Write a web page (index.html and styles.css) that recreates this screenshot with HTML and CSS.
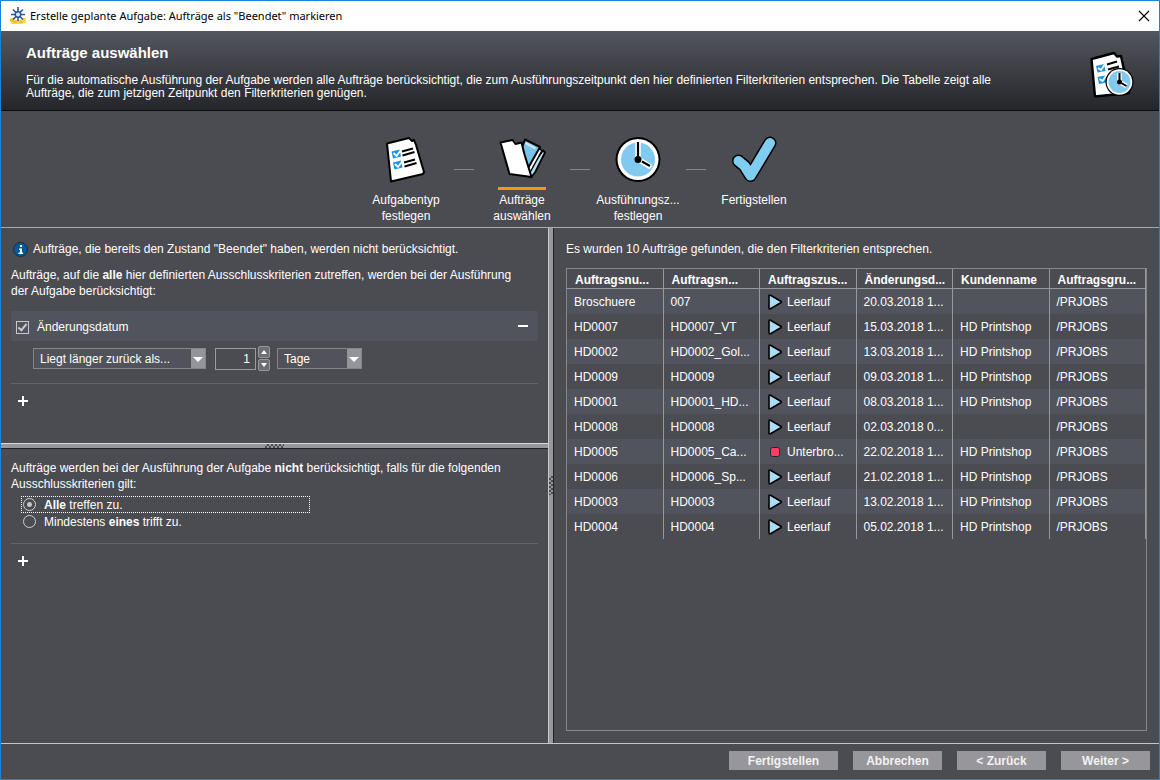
FILE: index.html
```html
<!DOCTYPE html>
<html lang="de">
<head>
<meta charset="utf-8">
<title>Erstelle geplante Aufgabe</title>
<link rel="stylesheet" href="styles.css">
</head>
<body>
<div class="window">
  <div class="titlebar">
    <svg class="app-icon" width="18" height="18" viewBox="0 0 18 18">
      <path d="M1 11h4l2 2h4l2-2h4v5h-3v1H2v-2H1z" fill="#ffd84a"/>
      <path d="M1 13h3v2h4M10 15h4" stroke="#e5a823" fill="none"/>
      <g stroke="#2a5697" stroke-width="1.600" fill="none"><path d="M9 0v14M2 7.500h14M4 2.500l10 10M14 2.500l-10 10"/></g>
      <circle cx="9" cy="7.500" r="3.500" fill="#2a5697"/><circle cx="9" cy="7.500" r="2" fill="#d9ecfb"/>
    </svg>
    <span class="window-title">Erstelle geplante Aufgabe: Aufträge als "Beendet" markieren</span>
    <button class="close" type="button" aria-label="Schließen">
      <svg width="12" height="12" viewBox="0 0 12 12"><path d="M1 1l10 10M11 1L1 11" stroke="#000" stroke-width="1.100"/></svg>
    </button>
  </div>

  <header class="banner">
    <div class="banner-text">
      <h1>Aufträge auswählen</h1>
      <p>Für die automatische Ausführung der Aufgabe werden alle Aufträge berücksichtigt, die zum Ausführungszeitpunkt den hier definierten Filterkriterien entsprechen. Die Tabelle zeigt alle Aufträge, die zum jetzigen Zeitpunkt den Filterkriterien genügen.</p>
    </div>
    <svg class="banner-icon" width="46" height="48" viewBox="0 0 46 48">
      <path d="M2.500 8L25 2l3 3.500 4-.5 8 37-34 3.500z" fill="#fff" stroke="#000" stroke-width="2.400" stroke-linejoin="round"/>
      <path d="M7 15l8-2 1.500 7-8 1.500zM8.500 26l8-1.500 1.500 7-8 1.500z" fill="#1b95e0"/>
      <path d="M9 17l3 2 4-6M10.500 28l3 2 4-6" fill="none" stroke="#fff" stroke-width="1.800"/>
      <path d="M18 13.500l10-3M19 18.500l11-3M20 25l5-2" stroke="#000" stroke-width="2"/>
      <circle cx="30.500" cy="31" r="14" fill="#000"/><circle cx="30.500" cy="31" r="12.800" fill="#fff"/>
      <circle cx="30.500" cy="31" r="11" fill="#82c9ec"/>
      <path d="M30.500 31v-9M30.500 31l7 4" stroke="#fff" stroke-width="4.500"/>
      <path d="M30.500 31v-9M30.500 31l7 4" stroke="#000" stroke-width="2"/>
      <circle cx="30.500" cy="31" r="2.500" fill="#000"/>
    </svg>
  </header>

  <nav class="steps" aria-label="Schritte">
    <div class="step">
      <svg width="48" height="48" viewBox="0 0 48 48">
        <path d="M5 8.500L27 3l3 3 2-1 2 5 8 27-1 2-32 7.500z" fill="#fff" stroke="#000" stroke-width="2" stroke-linejoin="round"/>
        <path d="M9.500 16.500l8-2 1.500 7-8 2zM11 27.500l8-2 1.500 7-8 2z" fill="#1b95e0"/>
        <path d="M11.500 18l3 3 4.500-6M13 29l3 3 4.500-6" fill="none" stroke="#fff" stroke-width="1.800"/>
        <path d="M20 16.500l11-3M20.500 20.500l12-3.500M22 27.500l11-3M22.500 31.500l12-3.500" stroke="#000" stroke-width="2"/>
      </svg>
      <span>Aufgabentyp festlegen</span>
    </div>
    <div class="line"></div>
    <div class="step current">
      <svg width="48" height="48" viewBox="0 0 48 48">
        <path d="M30 36L45 15.500l2 2-10 20-4 5z" fill="#b4dff5" stroke="#000" stroke-width="1.800" stroke-linejoin="round"/>
        <path d="M28 34L40 13l4 2.500-12 22z" fill="#fff" stroke="#000" stroke-width="1.500" stroke-linejoin="round"/>
        <path d="M22 18L27 4.500l15 7.500-13 23z" fill="#78c4ea" stroke="#000" stroke-width="2" stroke-linejoin="round"/>
        <path d="M27.500 8l10 5.500" stroke="#cdeafa" stroke-width="2"/>
        <path d="M2.500 7.500l12-2.500 3 4 6-1.500 3 12 7 22.500-22-3z" fill="#fff" stroke="#000" stroke-width="2" stroke-linejoin="round"/>
      </svg>
      <span>Aufträge auswählen</span>
    </div>
    <div class="line"></div>
    <div class="step">
      <svg width="48" height="48" viewBox="0 0 48 48">
        <circle cx="24" cy="24.500" r="22.500" fill="#000"/><circle cx="24" cy="24.500" r="20.500" fill="#fff"/>
        <circle cx="24" cy="24.500" r="17" fill="#82c9ef"/>
        <path d="M24 24V8M27 26l8 5" stroke="#fff" stroke-width="5.500" stroke-linecap="round"/>
        <path d="M24 24V7M28 26.500l8 4.500" stroke="#000" stroke-width="2.200"/>
        <circle cx="24" cy="24.500" r="3.500" fill="#000"/>
      </svg>
      <span>Ausführungsz... festlegen</span>
    </div>
    <div class="line"></div>
    <div class="step">
      <svg width="48" height="48" viewBox="0 0 48 48">
        <path d="M8.500 26l6 5 6 9.500L40 8" fill="none" stroke="#000" stroke-width="13" stroke-linecap="round" stroke-linejoin="round"/>
        <path d="M8.500 26l6 5 6 9.500L40 8" fill="none" stroke="#7fcdf1" stroke-width="10" stroke-linecap="round" stroke-linejoin="round"/>
      </svg>
      <span>Fertigstellen</span>
    </div>
  </nav>

  <main class="content">
    <div class="filters">
      <section class="pane include">
        <p class="info">
          <svg width="15" height="15" viewBox="0 0 15 15"><circle cx="7.500" cy="7.500" r="7" fill="#005a9a" stroke="#242a38"/><path d="M7 3h2v2H7zM6 6.500h3v4h1V12H5.500v-1.500H7V8H6z" fill="#fff"/></svg>
          Aufträge, die bereits den Zustand "Beendet" haben, werden nicht berücksichtigt.
        </p>
        <p class="text">Aufträge, auf die <b>alle</b> hier definierten Ausschlusskriterien zutreffen, werden bei der Ausführung der Aufgabe berücksichtigt:</p>
        <div class="criterion">
          <label><input class="check" type="checkbox" checked>Änderungsdatum</label>
          <button class="icon-button" type="button" aria-label="Kriterium entfernen"><svg width="10" height="10" viewBox="0 0 10 10"><path d="M0 4h10v2H0z" fill="#fff"/></svg></button>
        </div>
        <div class="fields">
          <select class="select comparison" aria-label="Vergleich"><option>Liegt länger zurück als...</option></select>
          <div class="spinner">
            <input class="amount" type="text" value="1" aria-label="Anzahl">
            <div class="spin-buttons">
              <button type="button" aria-label="Mehr"><svg width="6" height="4" viewBox="0 0 6 4"><path d="M0 4l3-4 3 4z" fill="#fff"/></svg></button>
              <button type="button" aria-label="Weniger"><svg width="6" height="4" viewBox="0 0 6 4"><path d="M0 0l3 4 3-4z" fill="#fff"/></svg></button>
            </div>
          </div>
          <select class="select unit" aria-label="Einheit"><option>Tage</option></select>
        </div>
        <div class="add-row"><button class="icon-button" type="button" aria-label="Kriterium hinzufügen"><svg width="10" height="10" viewBox="0 0 10 10"><path d="M0 4h4V0h2v4h4v2H6v4H4V6H0z" fill="#fff"/></svg></button></div>
      </section>
      <div class="split horizontal"><i class="grip"></i></div>
      <section class="pane exclude">
        <p class="text">Aufträge werden bei der Ausführung der Aufgabe <b>nicht</b> berücksichtigt, falls für die folgenden Ausschlusskriterien gilt:</p>
        <div class="radios">
          <label class="focused"><input type="radio" name="match" checked><span><b>Alle</b> treffen zu.</span></label>
          <label><input type="radio" name="match"><span>Mindestens <b>eines</b> trifft zu.</span></label>
        </div>
        <div class="add-row"><button class="icon-button" type="button" aria-label="Ausschlusskriterium hinzufügen"><svg width="10" height="10" viewBox="0 0 10 10"><path d="M0 4h4V0h2v4h4v2H6v4H4V6H0z" fill="#fff"/></svg></button></div>
      </section>
    </div>
    <div class="split vertical"><i class="grip"></i></div>
    <section class="results">
      <p>Es wurden 10 Aufträge gefunden, die den Filterkriterien entsprechen.</p>
      <div class="table-box">
        <svg class="symbols" width="0" height="0">
          <symbol id="idle" viewBox="0 0 14 16"><path d="M1 1.200v13.600h1.500L13.200 8.500v-1L2.500 1.200z" fill="#a9dcf5" stroke="#000" stroke-width="1.600" stroke-linejoin="round"/></symbol>
          <symbol id="stopped" viewBox="0 0 14 16"><rect x="2.500" y="3.500" width="9" height="9" rx="2" fill="#ff3b68" stroke="#26262a"/></symbol>
        </svg>
        <table>
          <thead><tr><th>Auftragsnu...</th><th>Auftragsn...</th><th>Auftragszus...</th><th>Änderungsd...</th><th>Kundenname</th><th>Auftragsgru...</th></tr></thead>
          <tbody>
            <tr><td>Broschuere</td><td>007</td><td><svg class="state"><use href="#idle"/></svg>Leerlauf</td><td>20.03.2018 1...</td><td></td><td>/PRJOBS</td></tr>
            <tr><td>HD0007</td><td>HD0007_VT</td><td><svg class="state"><use href="#idle"/></svg>Leerlauf</td><td>15.03.2018 1...</td><td>HD Printshop</td><td>/PRJOBS</td></tr>
            <tr><td>HD0002</td><td>HD0002_Gol...</td><td><svg class="state"><use href="#idle"/></svg>Leerlauf</td><td>13.03.2018 1...</td><td>HD Printshop</td><td>/PRJOBS</td></tr>
            <tr><td>HD0009</td><td>HD0009</td><td><svg class="state"><use href="#idle"/></svg>Leerlauf</td><td>09.03.2018 1...</td><td>HD Printshop</td><td>/PRJOBS</td></tr>
            <tr><td>HD0001</td><td>HD0001_HD...</td><td><svg class="state"><use href="#idle"/></svg>Leerlauf</td><td>08.03.2018 1...</td><td>HD Printshop</td><td>/PRJOBS</td></tr>
            <tr><td>HD0008</td><td>HD0008</td><td><svg class="state"><use href="#idle"/></svg>Leerlauf</td><td>02.03.2018 0...</td><td></td><td>/PRJOBS</td></tr>
            <tr><td>HD0005</td><td>HD0005_Ca...</td><td><svg class="state"><use href="#stopped"/></svg>Unterbro...</td><td>22.02.2018 1...</td><td>HD Printshop</td><td>/PRJOBS</td></tr>
            <tr><td>HD0006</td><td>HD0006_Sp...</td><td><svg class="state"><use href="#idle"/></svg>Leerlauf</td><td>21.02.2018 1...</td><td>HD Printshop</td><td>/PRJOBS</td></tr>
            <tr><td>HD0003</td><td>HD0003</td><td><svg class="state"><use href="#idle"/></svg>Leerlauf</td><td>13.02.2018 1...</td><td>HD Printshop</td><td>/PRJOBS</td></tr>
            <tr><td>HD0004</td><td>HD0004</td><td><svg class="state"><use href="#idle"/></svg>Leerlauf</td><td>05.02.2018 1...</td><td>HD Printshop</td><td>/PRJOBS</td></tr>
          </tbody>
        </table>
      </div>
    </section>
  </main>

  <footer class="actions">
    <button class="action wide" type="button">Fertigstellen</button>
    <button class="action" type="button">Abbrechen</button>
    <button class="action" type="button">&lt; Zurück</button>
    <button class="action" type="button">Weiter &gt;</button>
  </footer>
</div>
</body>
</html>
```
FILE: styles.css
```css
* { box-sizing: border-box; }
body { margin: 0; }
h1, p { margin: 0; }
button, input, select { font: inherit; color: inherit; margin: 0; }
svg { flex: none; }

.window {
  display: flex;
  flex-direction: column;
  min-height: 100vh;
  border: 1px solid #1883d7;
  background: #4b4b52;
  color: #fff;
  font: 12px/16px "Liberation Sans", Arial, sans-serif;
}

.titlebar {
  display: flex;
  align-items: center;
  gap: 3px;
  height: 30px;
  padding: 0 8px;
  background: #fff;
  color: #000;
}
.window-title { flex: 1; font: 11px/16px "Noto Sans", "Segoe UI", sans-serif; }
.close { display: flex; padding: 1px; border: 0; background: none; }

.banner {
  display: flex;
  align-items: center;
  justify-content: space-between;
  gap: 64px;
  height: 80px;
  padding: 0 24px 0 25px;
  border-bottom: 1px solid #0c0c0e;
  background: linear-gradient(#54565f, #25262a);
}
.banner h1 { font-size: 15px; line-height: 16px; margin-bottom: 13px; }
.banner p { line-height: 13px; }
.banner-text { padding-top: 3px; }
.banner-icon { margin-top: 8px; }

.steps {
  display: flex;
  justify-content: center;
  height: 117px;
  padding-top: 24px;
  border-bottom: 1px solid #a4abb5;
}
.step {
  display: flex;
  flex-direction: column;
  align-items: center;
  width: 96px;
  text-align: center;
}
.step svg { height: 52px; padding-bottom: 4px; margin-bottom: 5px; }
.step.current svg { height: 55px; margin-bottom: 2px; border-bottom: 3px solid #ff9408; }
.line { width: 20px; height: 1px; margin-top: 34px; background: #85858a; }

.content {
  flex: 1;
  display: grid;
  grid-template-columns: minmax(0, 547fr) 6px minmax(0, 605fr);
}
.filters { display: flex; flex-direction: column; }
.pane { padding: 0 10px; }
.include { height: 215px; padding-top: 13px; }
.exclude { padding-top: 11px; }

.info { display: flex; align-items: center; gap: 5px; padding: 0 2px; margin-bottom: 10px; }
.text { padding-right: 10px; }
.criterion {
  display: flex;
  align-items: center;
  justify-content: space-between;
  height: 30px;
  margin-top: 12px;
  padding: 0 5px;
  background: #51545c;
}
.criterion label { display: flex; align-items: center; gap: 8px; padding-top: 2px; }
.check {
  appearance: none;
  display: grid;
  place-items: center;
  width: 13px;
  height: 13px;
  border: 1px solid #c9c9cc;
}
.check:checked::after {
  content: "";
  box-sizing: border-box;
  width: 5px;
  height: 9px;
  margin-bottom: 2px;
  border: solid #c9c9cc;
  border-width: 0 2px 2px 0;
  transform: rotate(40deg);
}
.icon-button { display: flex; padding: 5px; border: 0; background: none; }

.fields { display: flex; align-items: center; padding: 5px 0 0 22px; }
.select {
  appearance: none;
  height: 21px;
  padding: 0 20px 0 6px;
  border: 1px solid #85858a;
  border-radius: 0;
  background:
    url('data:image/svg+xml,<svg xmlns="http://www.w3.org/2000/svg" width="14" height="19"><path d="M0 0h14v19H0z" fill="%2394959a"/><path d="M2 8h10l-5 5z" fill="%23fff"/></svg>') right no-repeat,
    #52535a;
}
.comparison { width: 173px; margin-right: 9px; }
.unit { width: 85px; }
.spinner { display: flex; align-items: center; gap: 2px; margin-right: 7px; }
.amount {
  width: 41px;
  height: 22px;
  padding: 0 5px;
  border: 1px solid #9a9a9e;
  background: #4b4b52;
  text-align: right;
}
.spin-buttons { display: flex; flex-direction: column; gap: 1px; }
.spin-buttons button {
  display: grid;
  place-items: center;
  width: 12px;
  height: 12px;
  padding: 0;
  border: 1px solid #97989d;
  border-radius: 2px;
  background: #6d6e74;
}
.add-row { margin-top: 12px; padding: 7px 2px; border-top: 1px solid #636369; }

.split { display: flex; align-items: center; justify-content: center; background: #98989c; }
.horizontal { height: 6px; border-top: 1px solid #d9d9db; border-bottom: 1px solid #222226; }
.vertical { border-left: 1px solid #c8c8ca; border-right: 1px solid #222226; }
.grip { background: repeating-conic-gradient(#4b4b50 0 25%, transparent 0 50%) 0 0 / 4px 4px; }
.horizontal .grip { width: 19px; height: 4px; }
.vertical .grip { width: 4px; height: 19px; }

.radios { display: flex; flex-direction: column; align-items: flex-start; padding: 4px 0 0 10px; }
.radios label {
  display: flex;
  align-items: center;
  gap: 8px;
  width: 289px;
  height: 17px;
  padding: 0 1px;
  border: 1px dotted transparent;
}
.radios label.focused { border-color: #fff; }
.radios input {
  appearance: none;
  width: 13px;
  height: 13px;
  border: 1px solid #d0d0d3;
  border-radius: 50%;
}
.radios input:checked { background: radial-gradient(#c4c4c7 0 2px, transparent 3px); }
.exclude .add-row { margin-top: 13px; }

.results { display: flex; flex-direction: column; gap: 11px; padding: 13px 12px 12px; }
.table-box { flex: 1; border: 1px solid #87878a; }
.symbols { display: block; }
table { width: 100%; table-layout: fixed; border-collapse: separate; border-spacing: 0; }
th, td {
  padding: 0 0 0 7px;
  border-right: 1px solid #98989b;
  text-align: left;
  white-space: nowrap;
  overflow: hidden;
}
th { height: 20px; padding: 2px 0 0 8px; border-bottom: 1px solid #98989b; }
td { height: 25px; }
tbody tr:nth-child(odd) { background: #51545c; }
.state { width: 14px; height: 16px; margin: 0 5px 0 1px; vertical-align: -4px; }

.actions {
  display: flex;
  justify-content: flex-end;
  gap: 15px;
  height: 36px;
  padding: 7px 9px 0;
  border-top: 1px solid #c5c5c7;
}
.action {
  width: 89px;
  height: 19px;
  padding: 0;
  border: 0;
  background: #96969b;
  color: #f2f2f2;
  font-weight: bold;
}
.action.wide { width: 109px; }
```
